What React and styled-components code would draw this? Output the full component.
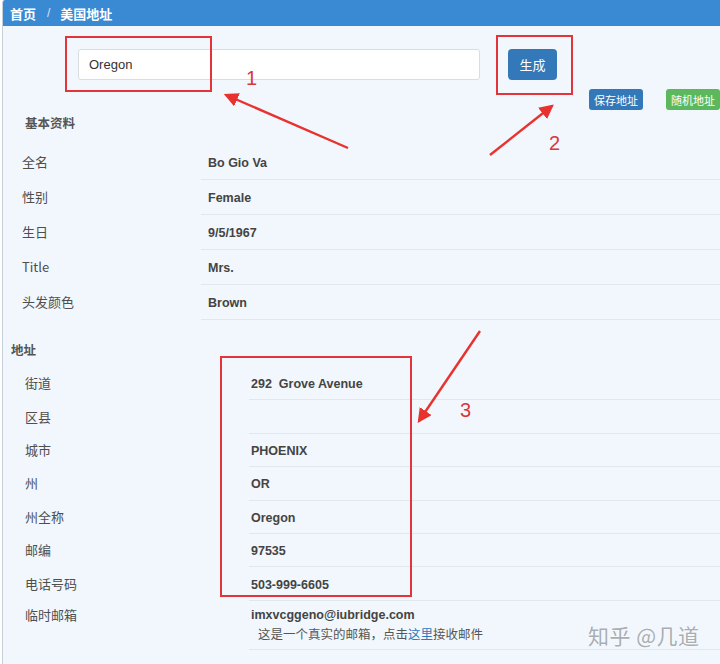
import React from "react";
import styled, { createGlobalStyle } from "styled-components";

const GlobalStyle = createGlobalStyle`
  html, body {
    margin: 0;
    padding: 0;
    background: #fff;
  }
  body {
    font-family: "Liberation Sans", Arial, "Noto Sans CJK SC", sans-serif;
    color: #444;
    width: 720px;
    height: 664px;
    overflow: hidden;
  }
`;

const basic = [
  ["全名", "Bo Gio Va"],
  ["性别", "Female"],
  ["生日", "9/5/1967"],
  ["Title", "Mrs."],
  ["头发颜色", "Brown"],
];

const address = [
  ["街道", "292\u00a0 Grove Avenue"],
  ["区县", ""],
  ["城市", "PHOENIX"],
  ["州", "OR"],
  ["州全称", "Oregon"],
  ["邮编", "97535"],
  ["电话号码", "503-999-6605"],
];

const App = () => {
  return (
    <Page>
      <GlobalStyle />
      <Panel>
        <Header>
          <Crumb>首页</Crumb>
          <Sep>/</Sep>
          <Crumb>美国地址</Crumb>
        </Header>

        <FormRow>
          <Input defaultValue="Oregon" />
          <MainBtn>生成</MainBtn>
        </FormRow>

        <ActionRow>
          <SmallBtn>保存地址</SmallBtn>
          <SmallBtn green>随机地址</SmallBtn>
        </ActionRow>

        <SectionTitle indent={22} top={0} bottom={9}>基本资料</SectionTitle>
        <Table labelWidth={198} labelPad={19} valuePad={7}>
          {basic.map(([k, v]) => (
            <Row key={k} h={35}>
              <Label>{k}</Label>
              <Value>{v}</Value>
            </Row>
          ))}
        </Table>

        <SectionTitle indent={8} top={17} bottom={4}>地址</SectionTitle>
        <Table labelWidth={246} labelPad={22} valuePad={2}>
          {address.map(([k, v]) => (
            <Row key={k} h={33.4}>
              <Label>{k}</Label>
              <Value>{v}</Value>
            </Row>
          ))}
          <Row h={49}>
            <Label top>临时邮箱</Label>
            <Value multi>
              imxvcggeno@iubridge.com
              <Note>
                这是一个真实的邮箱，点击<Link>这里</Link>接收邮件
              </Note>
            </Value>
          </Row>
        </Table>
      </Panel>

      <Watermark>知乎 @几道</Watermark>

      <RedBox style={{ left: 65, top: 36, width: 147, height: 56 }} />
      <RedBox style={{ left: 496, top: 35, width: 77, height: 60 }} />
      <RedBox style={{ left: 220, top: 356, width: 192, height: 241 }} />
      <Num style={{ left: 246, top: 67 }}>1</Num>
      <Num style={{ left: 549, top: 132 }}>2</Num>
      <Num style={{ left: 460, top: 399 }}>3</Num>

      <Arrows width="720" height="664" viewBox="0 0 720 664">
        <defs>
          <marker id="head" markerWidth="6" markerHeight="6" refX="5" refY="3" orient="auto">
            <path d="M0 0 L6 3 L0 6 Z" fill="#e8322f" />
          </marker>
        </defs>
        <path d="M348 148 L226 95" stroke="#e8322f" strokeWidth="2.4" fill="none" markerEnd="url(#head)" />
        <path d="M490 155 L552 106" stroke="#e8322f" strokeWidth="2.4" fill="none" markerEnd="url(#head)" />
        <path d="M480 331 L419 421" stroke="#e8322f" strokeWidth="2.4" fill="none" markerEnd="url(#head)" />
      </Arrows>
    </Page>
  );
};

export default App;

const Page = styled.div`
  position: relative;
  width: 720px;
  height: 664px;
  padding-left: 2px;
  box-sizing: border-box;
  overflow: hidden;
`;

const Panel = styled.div`
  height: 100%;
  background: #f1f7fc;
  border-left: 1px solid #c4cfd9;
  border-top-left-radius: 3px;
  overflow: hidden;
`;

const Header = styled.div`
  height: 26px;
  background: #3a89d3;
  display: flex;
  align-items: center;
  padding-left: 7px;
  color: #fff;
  font-size: 13px;
  font-weight: bold;
`;

const Crumb = styled.span`
  font-family: "Noto Sans CJK SC", sans-serif;
  font-weight: bold;
`;

const Sep = styled.span`
  margin: 0 10px 0 11px;
  font-weight: normal;
  color: #d6e6f5;
  font-size: 12px;
`;

const FormRow = styled.div`
  display: flex;
  align-items: center;
  margin-top: 23px;
  padding-left: 75px;
`;

const Input = styled.input`
  width: 402px;
  height: 31px;
  box-sizing: border-box;
  border: 1px solid #d9dde2;
  border-radius: 3px;
  background: #fff;
  padding: 0 10px;
  font-family: "Liberation Sans", Arial, sans-serif;
  font-size: 13px;
  color: #333;
  outline: none;
`;

const MainBtn = styled.button`
  margin-left: 28px;
  width: 49px;
  height: 31px;
  border: none;
  border-radius: 4px;
  background: #3378b8;
  color: #fff;
  font-family: "Noto Sans CJK SC", sans-serif;
  font-size: 13px;
  padding: 0;
`;

const ActionRow = styled.div`
  display: flex;
  justify-content: flex-end;
  gap: 23px;
  margin-top: 9px;
`;

const SmallBtn = styled.button`
  width: 54px;
  height: 21px;
  border: none;
  border-radius: 3px;
  padding: 0;
  background: ${({ green }) => (green ? "#5cb85c" : "#3378b8")};
  color: #fff;
  font-family: "Noto Sans CJK SC", sans-serif;
  font-size: 11px;
`;

const SectionTitle = styled.div`
  margin-top: ${({ top }) => top}px;
  margin-bottom: ${({ bottom }) => bottom}px;
  padding-left: ${({ indent }) => indent}px;
  height: 26px;
  line-height: 26px;
  font-family: "Noto Sans CJK SC", sans-serif;
  font-weight: bold;
  font-size: 12.5px;
  color: #555;
`;

const Table = styled.div`
  display: grid;
  grid-template-columns: ${({ labelWidth }) => labelWidth}px 1fr;
  & > div > span:first-child {
    padding-left: ${({ labelPad }) => labelPad}px;
  }
  & > div > span:last-child {
    padding-left: ${({ valuePad }) => valuePad}px;
  }
`;

const Row = styled.div`
  display: contents;
  & > * {
    height: ${({ h }) => h}px;
  }
`;

const Label = styled.span`
  display: flex;
  align-items: ${({ top }) => (top ? "flex-start" : "center")};
  padding-top: ${({ top }) => (top ? "4px" : "0")};
  padding-bottom: ${({ top }) => (top ? "0" : "2px")};
  box-sizing: border-box;
  font-family: "Noto Sans CJK SC", sans-serif;
  font-size: 13px;
  color: #4e4e4e;
`;

const Value = styled.span`
  display: flex;
  flex-direction: ${({ multi }) => (multi ? "column" : "row")};
  justify-content: flex-start;
  align-items: ${({ multi }) => (multi ? "flex-start" : "center")};
  padding-top: ${({ multi }) => (multi ? "7px" : "2px")};
  box-sizing: border-box;
  border-bottom: 1px solid #dfe7ef;
  font-weight: bold;
  font-size: 12.5px;
  color: #444;
`;

const Note = styled.span`
  margin-top: 2px;
  padding-left: 7px;
  font-family: "Noto Sans CJK SC", sans-serif;
  font-weight: normal;
  font-size: 12.5px;
  color: #555;
`;

const Link = styled.span`
  color: #2f78bd;
`;

const Watermark = styled.div`
  position: absolute;
  left: 588px;
  top: 620px;
  font-family: "Noto Sans CJK SC", sans-serif;
  font-size: 21px;
  color: #a9aeb3;
  letter-spacing: 0.5px;
  text-shadow: 0 0 2px #fff;
`;

const RedBox = styled.div`
  position: absolute;
  border: 2px solid #e3343a;
  box-sizing: border-box;
`;

const Num = styled.div`
  position: absolute;
  font-family: "Liberation Sans", Arial, sans-serif;
  font-size: 20px;
  color: #d8373b;
`;

const Arrows = styled.svg`
  position: absolute;
  left: 0;
  top: 0;
  pointer-events: none;
`;
